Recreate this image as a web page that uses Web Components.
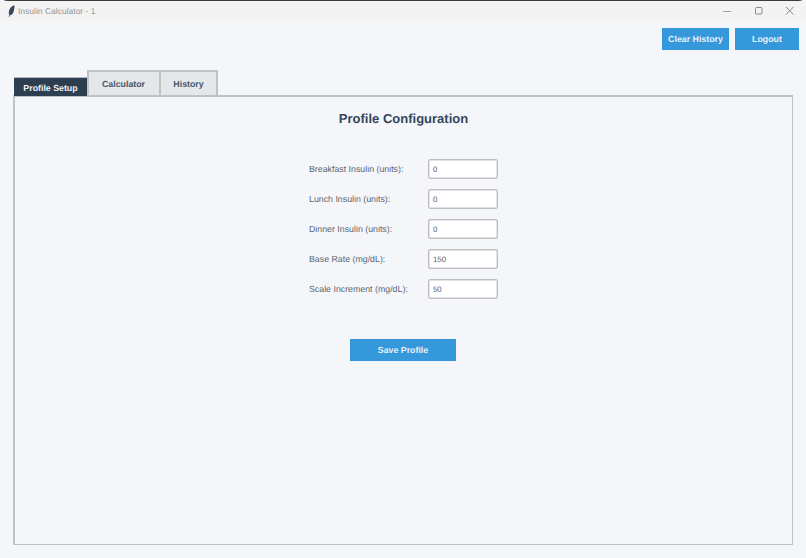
<!DOCTYPE html>
<html>
<head>
<meta charset="utf-8">
<title>Insulin Calculator - 1</title>
<style>
  html, body { margin: 0; height: 100%; }
  body { background: #f5f6fa; font-family: "Liberation Sans", Arial, sans-serif; overflow: hidden; text-rendering: geometricPrecision; }
</style>
</head>
<body>
<app-window>
  <action-button slot="actions" style="width:67px">Clear History</action-button>
  <action-button slot="actions" style="width:64px">Logout</action-button>
  <tab-bar slot="tabs"></tab-bar>
  <profile-form></profile-form>
</app-window>

<script>
class AppWindow extends HTMLElement {
  constructor() {
    super();
    this.attachShadow({mode: 'open'});
    this.shadowRoot.innerHTML = `
      <style>
        :host { display: flex; flex-direction: column; width: 806px; height: 558px; box-sizing: border-box; border-top: 1px solid #3c3c3c; border-radius: 7px 7px 0 0; background: #f5f6fa; }
        .titlebar { display: flex; align-items: center; height: 20px; background: #f3f3f4; flex: none; padding-left: 8px; }
        .titlebar svg.feather { width: 7px; height: 12px; margin-right: 3px; }
        .title { font: 8.500px "Liberation Sans", sans-serif; color: #969696; }
        .controls { margin-left: auto; display: flex; }
        .controls svg { width: 10px; height: 10px; margin-right: 21px; }
        .controls svg:last-child { margin-right: 11px; }
        .actions { display: flex; justify-content: flex-end; gap: 6px; padding: 7px 7px 0 0; flex: none; }
        .tabs { margin: 21px 0 0 14px; flex: none; height: 24px; position: relative; z-index: 1; }
        .panel { margin: 0 13px 13px 13px; flex: 1; box-sizing: border-box; border: 2px solid #c0c2c4; border-width: 2px 1px 1px 2px; background: #f5f6fa; }
      </style>
      <div class="titlebar">
        <svg class="feather" viewBox="0 0 7 12"><path d="M6.600.3C3.600 1 1.200 3.600.8 7c-.1 1 .1 2 .4 2.800L.7 11.700l.6.2.6-1.700c2.400-.2 3.700-2.400 4.100-5C6.300 3.300 6.600 1.700 6.600.3z" fill="#34495e"/></svg>
        <span class="title">Insulin Calculator - 1</span>
        <div class="controls">
          <svg viewBox="0 0 10 10"><path d="M0 5.500h8" stroke="#a5a5a5" stroke-width="1" fill="none"/></svg>
          <svg viewBox="0 0 10 10"><rect x="1.500" y="1.500" width="6.500" height="6.500" rx="1" stroke="#888" stroke-width="1" fill="none"/></svg>
          <svg viewBox="0 0 10 10"><path d="M1 1l7.500 7.500M8.500 1L1 8.500" stroke="#888" stroke-width="1" fill="none"/></svg>
        </div>
      </div>
      <div class="actions"><slot name="actions"></slot></div>
      <div class="tabs"><slot name="tabs"></slot></div>
      <div class="panel"><slot></slot></div>
    `;
  }
}

class ActionButton extends HTMLElement {
  constructor() {
    super();
    this.attachShadow({mode: 'open'});
    this.shadowRoot.innerHTML = `
      <style>
        :host { display: flex; align-items: center; justify-content: center; height: 22px; background: #3498db; color: #e6f1fa; font: bold 8.800px "Liberation Sans", Arial, sans-serif; }
      </style>
      <slot></slot>
    `;
  }
}

class TabBar extends HTMLElement {
  constructor() {
    super();
    this.attachShadow({mode: 'open'});
    this.shadowRoot.innerHTML = `
      <style>
        :host { display: flex; align-items: flex-end; height: 25px; font: bold 8.800px "Liberation Sans", Arial, sans-serif; }
        .tab { box-sizing: border-box; display: flex; align-items: center; justify-content: center; height: 25px; margin-bottom: 1px; background: #e4e8eb; color: #46566a; border: 1px solid #c0c2c4; border-width: 2px 2px 0 0; }
        .active { height: 19px; width: 73px; margin-bottom: 0; background: #2c3e50; color: #f2f4f6; border: 0; border-top: 1px solid #b4b7b9; padding: 2px 0 0; }
      </style>
      <div class="tab active">Profile Setup</div>
      <div class="tab" style="width:74px;padding-right:1px;border-left:2px solid #c0c2c4">Calculator</div>
      <div class="tab" style="width:57px">History</div>
    `;
  }
}

class FormRow extends HTMLElement {
  constructor() {
    super();
    this.attachShadow({mode: 'open'});
    this.shadowRoot.innerHTML = `
      <style>
        :host { display: flex; align-items: center; height: 20px; font: 8.800px "Liberation Sans", Arial, sans-serif; color: #5a6570; }
        .label { width: 119px; }
        .field { box-sizing: border-box; width: 70px; height: 20px; background: #fff; border: 1px solid #bdbfc0; border-radius: 2px; box-shadow: inset 0 0 0 .5px #c6c8c9; padding-left: 4px; display: flex; align-items: center; font: 7.800px "Liberation Sans", sans-serif; color: #5a6570; }
      </style>
      <span class="label"><slot></slot></span>
      <div class="field"></div>
    `;
    this.shadowRoot.querySelector('.field').textContent = this.getAttribute('value');
  }
}

class ProfileForm extends HTMLElement {
  constructor() {
    super();
    this.attachShadow({mode: 'open'});
    this.shadowRoot.innerHTML = `
      <style>
        :host { display: flex; flex-direction: column; align-items: center; }
        h2 { margin: 13px 0 31px; font: bold 13px/18px "Liberation Sans", Arial, sans-serif; color: #34465a; }
        .rows { display: flex; flex-direction: column; gap: 10px; width: 189px; }
        .save { display: flex; align-items: center; justify-content: center; width: 106px; height: 22px; margin: 40px 1px 0 0; background: #3498db; color: #e6f1fa; font: bold 8.800px "Liberation Sans", Arial, sans-serif; }
      </style>
      <h2>Profile Configuration</h2>
      <div class="rows">
        <form-row value="0">Breakfast Insulin (units):</form-row>
        <form-row value="0">Lunch Insulin (units):</form-row>
        <form-row value="0">Dinner Insulin (units):</form-row>
        <form-row value="150">Base Rate (mg/dL):</form-row>
        <form-row value="50">Scale Increment (mg/dL):</form-row>
      </div>
      <div class="save">Save Profile</div>
    `;
  }
}

customElements.define('app-window', AppWindow);
customElements.define('action-button', ActionButton);
customElements.define('tab-bar', TabBar);
customElements.define('form-row', FormRow);
customElements.define('profile-form', ProfileForm);
</script>
</body>
</html>
